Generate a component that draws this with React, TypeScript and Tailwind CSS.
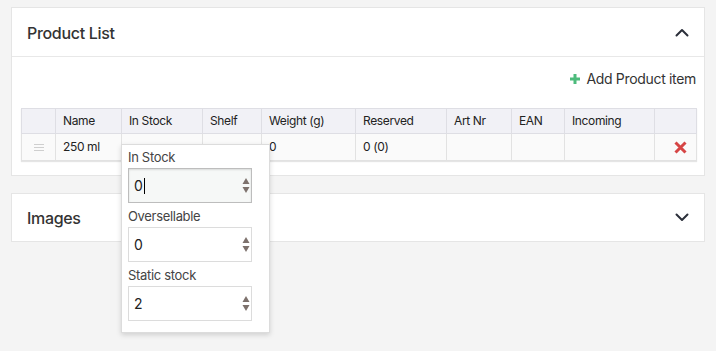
import { useState } from 'react';

const COLUMNS = [
  { key: 'handle', label: '', width: 34 },
  { key: 'name', label: 'Name', width: 66 },
  { key: 'stock', label: 'In Stock', width: 81 },
  { key: 'shelf', label: 'Shelf', width: 59 },
  { key: 'weight', label: 'Weight (g)', width: 94 },
  { key: 'reserved', label: 'Reserved', width: 91 },
  { key: 'art', label: 'Art Nr', width: 65 },
  { key: 'ean', label: 'EAN', width: 53 },
  { key: 'incoming', label: 'Incoming', width: 90 },
  { key: 'remove', label: '', width: 42 },
];

function Chevron({ up }: { up?: boolean }) {
  return (
    <svg width="14" height="9" viewBox="0 0 14 9" className="text-[#2b2f3a]">
      <path
        d={up ? 'M1.5 7.5 L7 2 L12.5 7.5' : 'M1.5 1.5 L7 7 L12.5 1.5'}
        fill="none"
        stroke="currentColor"
        strokeWidth="2"
        strokeLinecap="round"
        strokeLinejoin="round"
      />
    </svg>
  );
}

function Spinner() {
  return (
    <svg width="8" height="17" viewBox="0 0 8 17" className="text-[#7d716c]">
      <path d="M4 1 L7.5 7 L0.5 7 Z" fill="currentColor" />
      <path d="M4 16 L7.5 10 L0.5 10 Z" fill="currentColor" />
    </svg>
  );
}

function NumberField({ label, value, focused }: { label: string; value: string; focused?: boolean }) {
  return (
    <div>
      <p className="text-[13px] text-[#444] leading-[13px] mb-[4px]">{label}</p>
      <div
        className={
          focused
            ? 'w-[124px] h-[35px] flex items-center justify-between pl-[5px] pr-[1px] border border-[#bdbdbd] bg-[#f6f8f7] shadow-[inset_0_1px_2px_rgba(0,0,0,0.12)]'
            : 'w-[124px] h-[35px] flex items-center justify-between pl-[5px] pr-[1px] border border-[#dcdcdc] bg-white'
        }
      >
        <span className="text-[14px] text-[#222] flex items-center">
          {value}
          {focused && <span className="inline-block w-px h-[16px] bg-black ml-[1px]" />}
        </span>
        <Spinner />
      </div>
    </div>
  );
}

export default function App() {
  const [open, setOpen] = useState(true);

  return (
    <div
      className="min-h-[351px] bg-[#f4f4f4] px-[11px] pt-[7px] text-[#333] tracking-[-0.02em]"
      style={{ fontFamily: "Inter, 'Liberation Sans', sans-serif" }}
    >
      {/* Product List card */}
      <section className="bg-white border border-[#e5e5e5]">
        <header className="h-[49px] flex items-center justify-between pl-[15px] pr-[15px] pt-[1px] border-b border-[#e8e8e8]">
          <h2 className="text-[16px] font-medium text-[#333]">Product List</h2>
          <button onClick={() => setOpen(!open)}>
            <Chevron up />
          </button>
        </header>

        <div className="pl-[9px] pr-[8px] pb-[14px]">
          <div className="h-[51px] flex items-start justify-end pt-[11px]">
            <button className="flex items-center gap-[6px] text-[14px] text-[#333]">
              <svg width="10" height="10" viewBox="0 0 10 10">
                <path d="M5 0 V10 M0 5 H10" stroke="#4dbb7c" strokeWidth="3" />
              </svg>
              Add Product item
            </button>
          </div>

          <div className="relative">
            <table className="border-collapse text-[12px] tracking-[-0.03em] text-[#222] shadow-[0_1px_1px_rgba(0,0,0,0.1)]">
              <thead>
                <tr className="bg-[#f1f1f6] h-[25px]">
                  {COLUMNS.map((c) => (
                    <th
                      key={c.key}
                      className="border border-[#dedee4] font-normal text-left px-[7px]"
                      style={{ width: c.width, minWidth: c.width }}
                    >
                      {c.label}
                    </th>
                  ))}
                </tr>
              </thead>
              <tbody>
                <tr className="bg-[#fafafa] h-[27px]">
                  <td className="border border-[#e2e2e2] px-[7px]">
                    <div className="flex flex-col gap-[2px] w-[10px] mx-auto">
                      <span className="h-px bg-[#cfcfcf]" />
                      <span className="h-px bg-[#cfcfcf]" />
                      <span className="h-px bg-[#cfcfcf]" />
                    </div>
                  </td>
                  <td className="border border-[#e2e2e2] px-[7px]">250 ml</td>
                  <td className="border border-[#e2e2e2] px-[7px]"></td>
                  <td className="border border-[#e2e2e2] px-[7px]"></td>
                  <td className="border border-[#e2e2e2] px-[7px]">0</td>
                  <td className="border border-[#e2e2e2] px-[7px]">0 (0)</td>
                  <td className="border border-[#e2e2e2] px-[7px]"></td>
                  <td className="border border-[#e2e2e2] px-[7px]"></td>
                  <td className="border border-[#e2e2e2] px-[7px]"></td>
                  <td className="border border-[#e2e2e2] px-[7px]">
                    <div className="flex justify-end pr-[2px]">
                      <svg width="13" height="13" viewBox="0 0 13 13">
                        <path d="M1.5 1.5 L11.5 11.5 M11.5 1.5 L1.5 11.5" stroke="#d64545" strokeWidth="3" />
                      </svg>
                    </div>
                  </td>
                </tr>
              </tbody>
            </table>

            {/* In Stock popover */}
            <div className="absolute left-[100px] top-[36px] z-10 w-[149px] bg-white border border-[#dcdcdc] shadow-[0_2px_5px_rgba(0,0,0,0.15)] pl-[6px] pt-[6px] pb-[11px] flex flex-col gap-[7px]">
              <NumberField label="In Stock" value="0" focused />
              <NumberField label="Oversellable" value="0" />
              <NumberField label="Static stock" value="2" />
            </div>
          </div>
        </div>
      </section>

      {/* Images card */}
      <section className="mt-[17px] bg-white border border-[#e5e5e5] h-[49px] flex items-center justify-between px-[15px]">
        <h2 className="text-[16px] font-medium text-[#333]">Images</h2>
        <Chevron />
      </section>
    </div>
  );
}
